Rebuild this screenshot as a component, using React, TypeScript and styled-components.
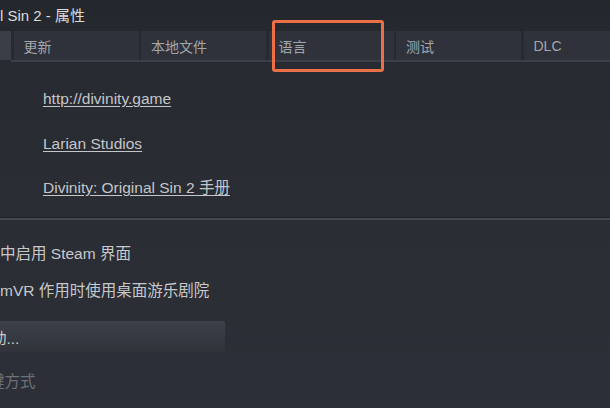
import * as React from 'react';
import styled, { createGlobalStyle } from 'styled-components';

const tabs = ['更新', '本地文件', '语言', '测试', 'DLC'];

const links = [
	'http://divinity.game',
	'Larian Studios',
	'Divinity: Original Sin 2 手册',
];

export default function App() {
	return (
		<>
			<GlobalStyle />
			<Window>
				<TitleBar>l Sin 2 - 属性</TitleBar>

				<TabBar>
					<TabRow>
						<Tab selected />
						{tabs.map((t, i) => (
							<Tab key={t} last={i === tabs.length - 1}>{t}</Tab>
						))}
					</TabRow>
					<TabLine />
					{/* highlight box drawn over the 语言 tab */}
					<Highlight />
				</TabBar>

				<Links>
					{links.map(l => <Link key={l}>{l}</Link>)}
				</Links>

				<Divider />

				<Options>
					<Option>中启用 Steam 界面</Option>
					<Option>mVR 作用时使用桌面游乐剧院</Option>
					<Button>
						<Cropped indent={-9}>动...</Cropped>
					</Button>
					<Option dim>
						<Cropped indent={-11}>键方式</Cropped>
					</Option>
				</Options>
			</Window>
		</>
	);
}

// STYLE
const GlobalStyle = createGlobalStyle`
	html, body {
		margin: 0;
		padding: 0;
		background: #2a2d34;
		overflow: hidden;
	}
	body {
		font-family: "Liberation Sans", "Noto Sans CJK SC", Arial, sans-serif;
	}
`;

const Window = styled.div`
	width: 610px;
	height: 408px;
	display: flex;
	flex-direction: column;
	background: linear-gradient(#24272c 0px, #272a30 62px, #2a2d33 220px, #2c2f37 408px);
	overflow: hidden;
`;

const TitleBar = styled.div`
	height: 31px;
	display: flex;
	align-items: center;
	padding-left: 0;
	padding-bottom: 2px;
	box-sizing: border-box;
	font-size: 15px;
	color: #d9dbdf;
	white-space: nowrap;
`;

const TabBar = styled.div`
	position: relative;
	display: flex;
	flex-direction: column;
`;

const TabRow = styled.div`
	display: flex;
	gap: 2.5px;
	height: 29px;
`;

const Tab = styled.div<{ selected?: boolean; last?: boolean }>`
	flex: ${p => (p.last ? '1' : 'none')};
	width: ${p => (p.selected ? '11px' : '125px')};
	display: flex;
	align-items: center;
	padding-left: 10px;
	box-sizing: border-box;
	background: ${p => (p.selected ? '#3a3e46' : '#2f323a')};
	color: #a2a6ad;
	font-size: 14px;
	white-space: nowrap;
`;

const TabLine = styled.div`
	margin-left: 11px;
	height: 2px;
	background: #3b3f47;
`;

const Highlight = styled.div`
	position: absolute;
	left: 272px;
	top: -11px;
	width: 112px;
	height: 52px;
	box-sizing: border-box;
	border: 3px solid #ec7047;
	border-radius: 3px;
`;

const Links = styled.div`
	display: flex;
	flex-direction: column;
	gap: 28.5px;
	padding: 29px 0 0 43px;
	height: 156px;
	box-sizing: border-box;
`;

const Link = styled.a`
	font-size: 15.5px;
	line-height: 16px;
	color: #c4c6ca;
	text-decoration: underline;
	text-underline-offset: 2px;
	cursor: pointer;
	width: max-content;
`;

const Divider = styled.div`
	height: 2px;
	background: #454951;
	box-shadow: 0 -1px 0 #1f2226;
`;

const Options = styled.div`
	display: flex;
	flex-direction: column;
	padding-top: 13.5px;
`;

const Option = styled.div<{ dim?: boolean }>`
	height: 37px;
	display: flex;
	align-items: center;
	font-size: 15.5px;
	color: ${p => (p.dim ? '#6c7078' : '#c6c8cc')};
	white-space: nowrap;
	overflow: hidden;
	margin-top: ${p => (p.dim ? '9.5px' : '0')};
`;

const Button = styled.div`
	margin-top: 13.5px;
	width: 225px;
	height: 31px;
	display: flex;
	align-items: center;
	border-radius: 0 2px 2px 0;
	background: linear-gradient(#3c4049, #30333a);
	font-size: 15.5px;
	color: #c6c8cc;
	overflow: hidden;
	white-space: nowrap;
`;

const Cropped = styled.span<{ indent: number }>`
	display: block;
	margin-left: ${p => p.indent}px;
`;
